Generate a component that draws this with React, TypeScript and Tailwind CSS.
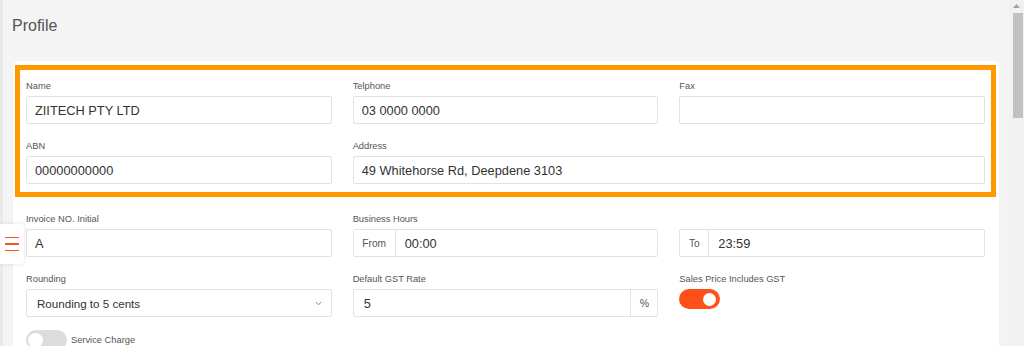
import React from "react";

const font = { fontFamily: '"Liberation Sans", Arial, sans-serif' };

function Label({ children }: { children: React.ReactNode }) {
  return (
    <div className="h-[15px] leading-[18px] text-[9.3px] text-[#555] mb-[4px] whitespace-nowrap">
      {children}
    </div>
  );
}

function TextInput({ value }: { value?: string }) {
  return (
    <div className="h-[28px] border border-[#e2e2e2] rounded-[2px] bg-white flex items-center pl-[8px] pt-[1px] text-[12.8px] text-[#333]">
      {value}
    </div>
  );
}

function AddonInput({ addon, value, addonW }: { addon: string; value: string; addonW: string }) {
  return (
    <div className="h-[28px] border border-[#e2e2e2] rounded-[2px] bg-white flex items-stretch">
      <div className={`${addonW} border-r border-[#e2e2e2] flex items-center justify-center pt-[1px] text-[10.2px] text-[#555]`}>
        {addon}
      </div>
      <div className="flex-1 flex items-center pl-[9px] pt-[1px] text-[12.8px] text-[#333]">{value}</div>
    </div>
  );
}

export default function App() {
  return (
    <div style={font} className="relative w-full h-[346px] overflow-hidden bg-[#f4f4f4] flex">
      <div className="w-[3px] bg-[#e9e9e9]" />
      <div className="flex-1 pl-[9px] pr-[10px] flex flex-col">
        <div className="pt-[16px] h-[36px] text-[16px] leading-[20px] text-[#555]">Profile</div>
        <div className="mt-[13px] h-px bg-[#e0e0e0] mr-[1px]" />
        <div className="mt-[12px] ml-[1px] flex-1 bg-white rounded-[6px] pt-[4px] pl-[13px] pr-[14px]">
          <div className="-mx-[11px] border-[5px] border-[#ff9900] pt-[7px] pb-[8px] pl-[6px] pr-[6px]">
            <div className="grid grid-cols-3 gap-x-[21px] gap-y-[13px]">
              <div>
                <Label>Name</Label>
                <TextInput value="ZIITECH PTY LTD" />
              </div>
              <div>
                <Label>Telphone</Label>
                <TextInput value="03 0000 0000" />
              </div>
              <div>
                <Label>Fax</Label>
                <TextInput />
              </div>
              <div>
                <Label>ABN</Label>
                <TextInput value="00000000000" />
              </div>
              <div className="col-span-2">
                <Label>Address</Label>
                <TextInput value="49 Whitehorse Rd, Deepdene 3103" />
              </div>
            </div>
          </div>
          <div className="mt-[13px] grid grid-cols-3 gap-x-[21px] gap-y-[13px]">
            <div>
              <Label>Invoice NO. Initial</Label>
              <TextInput value="A" />
            </div>
            <div>
              <Label>Business Hours</Label>
              <AddonInput addon="From" value="00:00" addonW="w-[42px]" />
            </div>
            <div>
              <Label>&nbsp;</Label>
              <AddonInput addon="To" value="23:59" addonW="w-[29px]" />
            </div>
            <div>
              <Label>Rounding</Label>
              <div className="h-[28px] border border-[#e2e2e2] rounded-[2px] bg-white flex items-center pl-[10px] pr-[9px] pt-[1px] text-[11.6px] text-[#333]">
                <span className="flex-1">Rounding to 5 cents</span>
                <svg width="7" height="5" viewBox="0 0 7 5" fill="none">
                  <path d="M0.8 1 L3.5 3.8 L6.2 1" stroke="#888" strokeWidth="1" />
                </svg>
              </div>
            </div>
            <div>
              <Label>Default GST Rate</Label>
              <div className="h-[28px] border border-[#e2e2e2] rounded-[2px] bg-white flex items-stretch">
                <div className="flex-1 flex items-center pl-[10px] pt-[1px] text-[12.8px] text-[#333]">5</div>
                <div className="w-[27px] border-l border-[#e2e2e2] flex items-center justify-center pt-[1px] text-[10.5px] text-[#555]">
                  %
                </div>
              </div>
            </div>
            <div>
              <Label>Sales Price Includes GST</Label>
              <div className="w-[41px] h-[20px] rounded-full bg-[#ff5019] flex items-center justify-end pr-[4px]">
                <div className="w-[13px] h-[13px] rounded-full bg-white" />
              </div>
            </div>
          </div>
          <div className="mt-[13px] flex items-center gap-[4px]">
            <div className="w-[41px] h-[20px] rounded-full bg-[#dcdcdc] flex items-center pl-[2px]">
              <div className="w-[15px] h-[15px] rounded-full bg-white" />
            </div>
            <span className="text-[9.3px] text-[#555] pt-[2px]">Service Charge</span>
          </div>
        </div>
      </div>
      <div className="w-[15px] bg-[#f1f1f1] flex flex-col items-center">
        <svg className="mt-[4px]" width="7" height="4" viewBox="0 0 7 4">
          <path d="M0 4 L3.5 0 L7 4 Z" fill="#a3a3a3" />
        </svg>
        <div className="mt-[5px] ml-[2px] w-[10px] h-[105px] bg-[#c1c1c1]" />
      </div>
      <div className="absolute left-0 top-[224px] w-[24px] h-[40px] bg-white rounded-r-[4px] shadow-[0_0_4px_rgba(0,0,0,0.12)] flex flex-col items-center justify-center gap-[5px]">
        <div className="w-[14px] h-[1.5px] bg-[#f4511e]" />
        <div className="w-[14px] h-[1.5px] bg-[#f4511e]" />
        <div className="w-[14px] h-[1.5px] bg-[#f4511e]" />
      </div>
    </div>
  );
}
